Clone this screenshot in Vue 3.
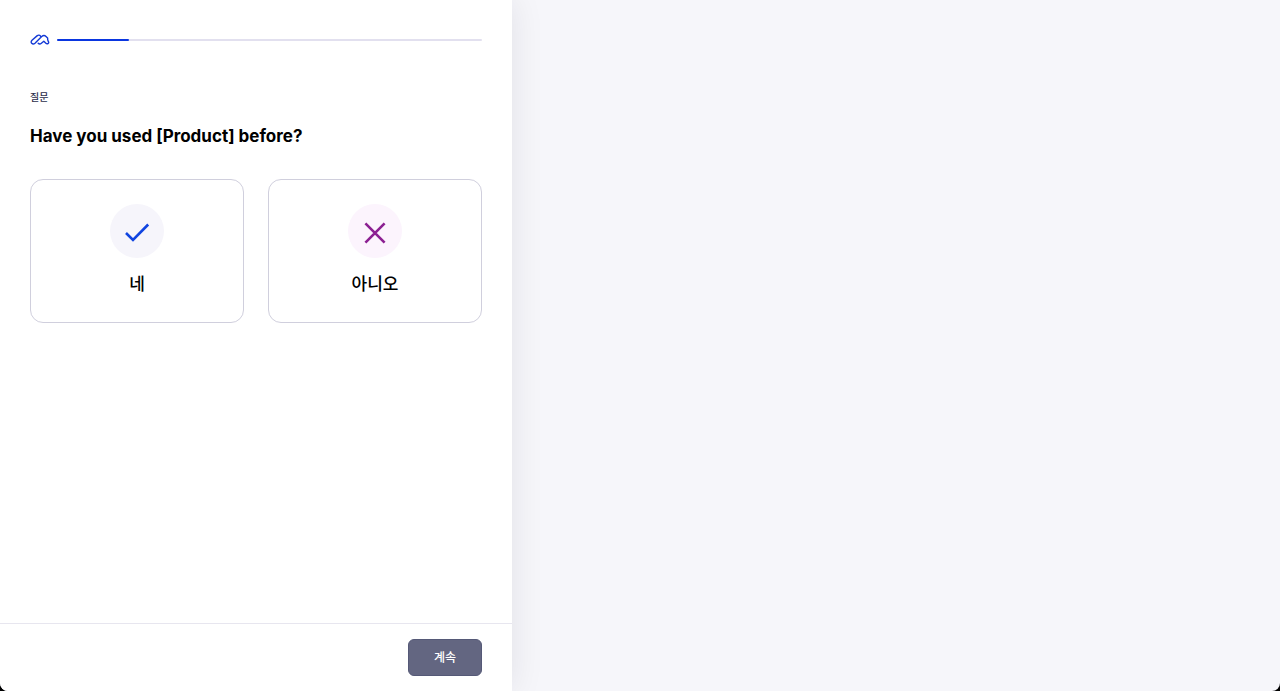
<script setup>
import { ref } from 'vue'

const progress = ref(17)
const choice = ref('')
const options = [
  { id: 'yes', label: '네' },
  { id: 'no', label: '아니오' },
]
</script>

<template>
  <div class="screen">
    <main class="panel">
      <header class="top">
        <svg class="logo" viewBox="0 0 20 12" aria-hidden="true">
          <path d="M10.8 2.6C9.9 .9 8.4 .7 7 1.9L2 6.3C1 7.3 .9 8.5 1.7 9.3 2.6 10.2 4 10.1 5 9.2L11.7 2.6C13.3 1.1 14.7 1.2 16 2.4L17.6 4 17.7 5.8 18.3 7.4C18.9 8.3 18.8 9.2 18 9.6 17.2 10 16.3 9.7 15.6 9L13.8 7.2 11.4 9.2C10.2 10.2 9 10.1 8.2 9.2" />
        </svg>
        <div class="track" role="progressbar" aria-label="진행률" :aria-valuenow="progress">
          <div class="bar" :style="{ width: progress + '%' }"></div>
        </div>
      </header>

      <section class="content">
        <p class="eyebrow">질문</p>
        <h1 class="question">Have you used [Product] before?</h1>
        <div class="options">
          <button
            v-for="option in options"
            :key="option.id"
            type="button"
            class="option"
            :aria-pressed="choice === option.id"
            @click="choice = option.id"
          >
            <span class="badge" :class="option.id">
              <svg v-if="option.id === 'yes'" viewBox="0 0 54 54" aria-hidden="true">
                <path d="M16 29 23 36 38.2 20.5" />
              </svg>
              <svg v-else viewBox="0 0 54 54" aria-hidden="true">
                <path d="M17.4 19.4 36.6 38.6M36.6 19.4 17.4 38.6" />
              </svg>
            </span>
            <span class="label">{{ option.label }}</span>
          </button>
        </div>
      </section>

      <footer class="footer">
        <button type="button" class="continue">계속</button>
      </footer>
    </main>
  </div>
</template>

<style>
body {
  background: #000;
}
</style>

<style scoped>
.screen {
  min-height: 100vh;
  display: flex;
  overflow: hidden;
  border-radius: 0 0 8px 8px;
  background: #f6f6fa;
  color: #000;
  font-family: Inter, "Noto Sans CJK KR", sans-serif;
}

.panel {
  width: 40%;
  box-sizing: border-box;
  display: flex;
  flex-direction: column;
  background: #fff;
  box-shadow: 0 0 32px rgba(20, 20, 40, 0.09);
}

.top {
  display: flex;
  align-items: center;
  gap: 7px;
  padding: 34px 30px 0;
}

.logo {
  width: 20px;
  height: 12px;
  fill: none;
  stroke: #1238d6;
  stroke-width: 1.4;
  stroke-linecap: round;
  stroke-linejoin: round;
}

.track {
  flex: 1;
  height: 2px;
  border-radius: 1px;
  background: #e2e0ef;
}

.bar {
  height: 100%;
  border-radius: 1px;
  background: #0a36e0;
}

.content {
  flex: 1;
  padding: 43px 30px 30px;
}

.eyebrow {
  margin: 0;
  font-size: 10px;
  line-height: 16px;
  font-weight: 500;
  color: #2c2e4c;
}

.question {
  margin: 18px 0 30px;
  font-size: 17px;
  line-height: 26px;
  font-weight: 700;
}

.options {
  display: grid;
  grid-template-columns: 1fr 1fr;
  gap: 24px;
}

.option {
  display: flex;
  flex-direction: column;
  align-items: center;
  gap: 12px;
  padding: 24px 16px;
  border: 1px solid #d0cfdd;
  border-radius: 13px;
  background: #fff;
  color: inherit;
  font: inherit;
  cursor: pointer;
}

.badge {
  width: 54px;
  height: 54px;
  border-radius: 50%;
}

.badge svg {
  display: block;
  fill: none;
  stroke-width: 2.6;
}

.yes {
  background: #f6f5fb;
  stroke: #1044e0;
}

.no {
  background: #fcf4fd;
  stroke: #8c2092;
}

.label {
  font-size: 17px;
  line-height: 28px;
  font-weight: 500;
}

.footer {
  display: flex;
  justify-content: flex-end;
  padding: 15px 30px;
  border-top: 1px solid #e7e6ef;
}

.continue {
  width: 74px;
  height: 37px;
  padding: 0;
  border: 1px solid #555977;
  border-radius: 6px;
  background: #636681;
  color: #fff;
  font: 500 12px/20px Inter, "Noto Sans CJK KR", sans-serif;
  cursor: pointer;
}
</style>
